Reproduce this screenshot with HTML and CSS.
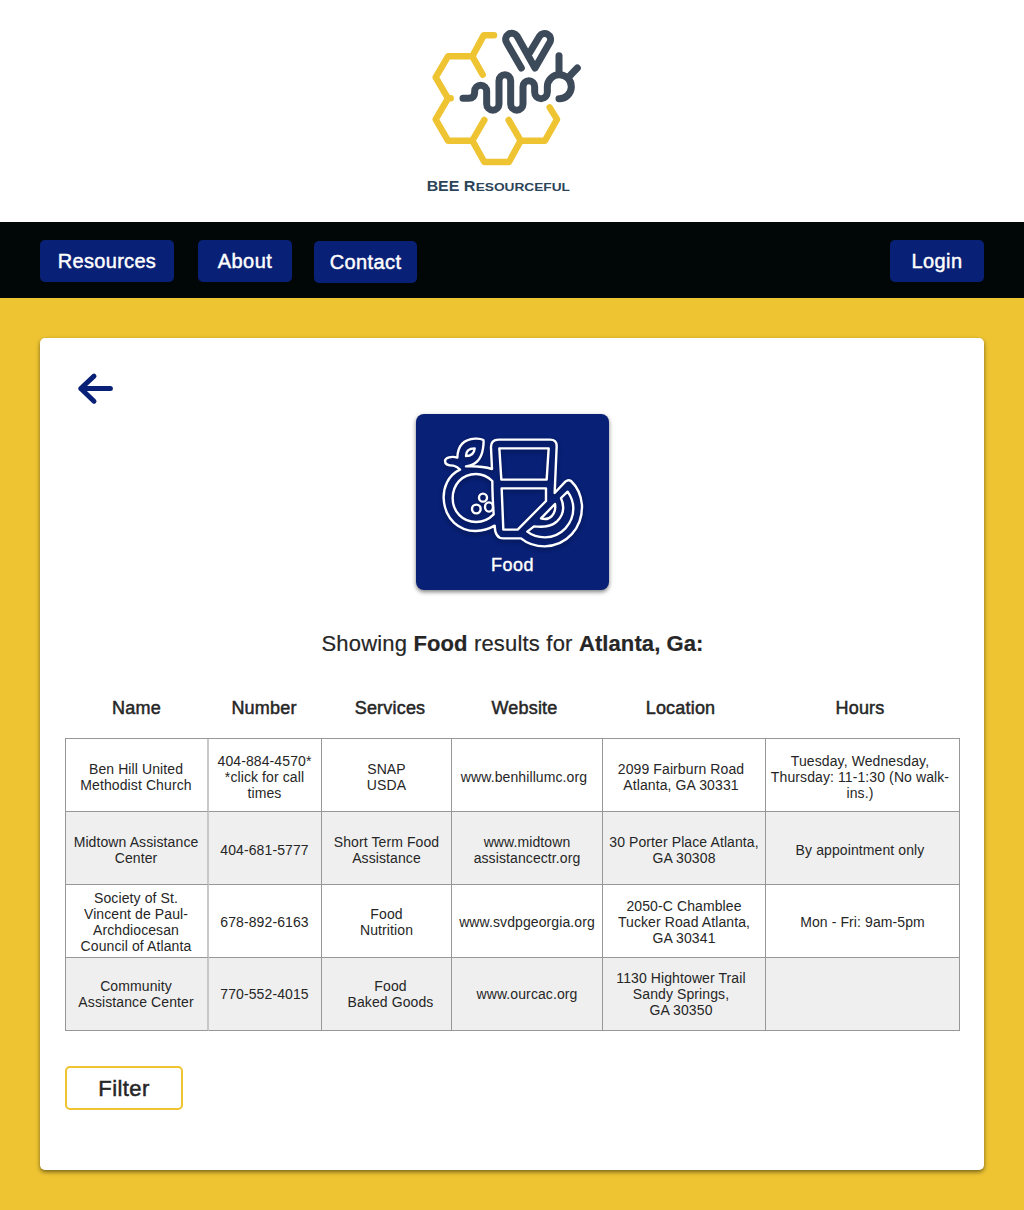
FILE: index.html
```html
<!DOCTYPE html>
<html lang="en">
<head>
<meta charset="utf-8">
<title>BEE Resourceful</title>
<link rel="stylesheet" href="styles.css">
</head>
<body>
<header class="brand">
  <svg class="brand-logo" viewBox="0 0 570 540" role="img" aria-label="BEE Resourceful">
    <g class="comb">
      <path d="M246 46H215L181 109L212 164M181 109H108L71 172L108 235H116M108 235L71 298L108 362H181L217 300M181 362L217 426H291L326 362L290 300M326 362H399L435 298L413 262"/>
    </g>
    <g class="bee">
      <path d="M153 235H170Q188 235 188 217V214A18 18 0 0 1 224 214V252A18.5 18.5 0 0 0 261 252V182A17.5 17.5 0 0 1 296 182V252A18.5 18.5 0 0 0 333 252V200A17.5 17.5 0 0 1 368 200V217A19 19 0 0 0 406 217V200A36 36 0 1 1 441 236"/>
      <path d="M441 162V107M470 171L496 144"/>
      <path d="M328 144L284 68A18 18 0 0 1 315 48L369 144L414 66A18 18 0 0 0 383 48L353 98"/>
    </g>
    <g class="brand-name">
      <text class="brand-cap" x="44" y="512" textLength="98" lengthAdjust="spacingAndGlyphs">BEE</text>
      <text class="brand-cap" x="155" y="512" textLength="35" lengthAdjust="spacingAndGlyphs">R</text>
      <text class="brand-small" x="191" y="512" textLength="283" lengthAdjust="spacingAndGlyphs">ESOURCEFUL</text>
    </g>
  </svg>
</header>

<nav class="nav">
  <a class="nav-button nav-resources">Resources</a>
  <a class="nav-button nav-about">About</a>
  <a class="nav-button nav-contact">Contact</a>
  <a class="nav-button nav-login">Login</a>
</nav>

<main class="page">
  <section class="card">
    <a class="back" aria-label="Back">
      <svg viewBox="0 0 37 33" width="37" height="33"><path d="M18 4.2L4.8 16.5L18 29.2M4.8 16.5H34.4"/></svg>
    </a>

    <div class="tile">
      <svg class="tile-icon" viewBox="90 90 440 345">
        <path d="M434 264L440 125Q441 104 420 104H266Q242 104 243 128L246 192Q215 182 168 184Q212 179 219 130Q222 110 220 105Q212 100 195 101C160 103 143 125 142 158C125 152 105 158 105 168C105 179 118 182 130 182Q141 184 150 194C112 212 100 250 101 280C104 345 150 378 197 378Q228 377 254 362Q255 400 280 400H333Q362 424 404 424C470 422 518 370 516 300Q512 255 483 228Q475 222 466 230Z"/>
        <path d="M168 153Q168 130 194 130Q192 153 168 153Z"/>
        <path d="M247 228Q225 207 198 207C155 207 128 240 128 280C128 320 158 351 198 351Q230 350 251 328Q247 270 247 228Z"/>
        <circle cx="219" cy="278" r="12"/>
        <circle cx="199" cy="312" r="13"/>
        <ellipse cx="237" cy="306" rx="12" ry="14"/>
        <path d="M268 130H416L410 224H274Z"/>
        <path d="M275 250H408V288L323 374H280Z"/>
        <path d="M473 260L453 279C464 305 461 330 441 349C422 366 400 367 372 364L352 380C368 393 385 397 405 397C455 396 490 355 490 310Q490 284 473 260Z"/>
        <path d="M435 297L393 340C418 349 440 327 435 297Z"/>
      </svg>
      <span class="tile-label">Food</span>
    </div>

    <h1 class="results-title">Showing <b>Food</b> results for <b>Atlanta, Ga:</b></h1>

    <div class="results-head">
      <span>Name</span><span>Number</span><span>Services</span><span>Website</span><span>Location</span><span>Hours</span>
    </div>
    <div class="results">
      <div class="row row-first">
        <div class="cell name">Ben Hill United<br>Methodist Church</div>
        <div class="cell number">404-884-4570*<br>*click for call<br>times</div>
        <div class="cell">SNAP<br>USDA</div>
        <div class="cell site-left">www.benhillumc.org</div>
        <div class="cell place">2099 Fairburn Road<br>Atlanta, GA 30331</div>
        <div class="cell hours">Tuesday, Wednesday,<br>Thursday: 11-1:30 (No walk-<br>ins.)</div>
      </div>
      <div class="row row-second">
        <div class="cell name">Midtown Assistance<br>Center</div>
        <div class="cell number">404-681-5777</div>
        <div class="cell">Short Term Food<br>Assistance</div>
        <div class="cell">www.midtown<br>assistancectr.org</div>
        <div class="cell">30 Porter Place Atlanta,<br>GA 30308</div>
        <div class="cell hours">By appointment only</div>
      </div>
      <div class="row row-third">
        <div class="cell name">Society of St.<br>Vincent de Paul-<br>Archdiocesan<br>Council of Atlanta</div>
        <div class="cell number">678-892-6163</div>
        <div class="cell">Food<br>Nutrition</div>
        <div class="cell">www.svdpgeorgia.org</div>
        <div class="cell">2050-C Chamblee<br>Tucker Road Atlanta,<br>GA 30341</div>
        <div class="cell hours-late">Mon - Fri: 9am-5pm</div>
      </div>
      <div class="row row-fourth">
        <div class="cell name">Community<br>Assistance Center</div>
        <div class="cell number">770-552-4015</div>
        <div class="cell goods">Food<br>Baked Goods</div>
        <div class="cell">www.ourcac.org</div>
        <div class="cell place">1130 Hightower Trail<br>Sandy Springs,<br>GA 30350</div>
        <div class="cell hours"></div>
      </div>
    </div>

    <button class="filter">Filter</button>
  </section>
</main>
</body>
</html>
```
FILE: styles.css
```css
* { box-sizing: border-box; }

body {
  margin: 0;
  background: #eec432;
  color: #262626;
  font-family: "Liberation Sans", Arial, Helvetica, sans-serif;
}

.brand {
  height: 222px;
  padding-top: 20px;
  padding-left: 412px;
  background: #fff;
}
.brand-logo { display: block; width: 190px; height: 180px; }
.comb, .bee {
  fill: none;
  stroke-linecap: round;
  stroke-linejoin: round;
}
.comb { stroke: #eec432; stroke-width: 19.5; }
.bee { stroke: #3d4a5a; stroke-width: 21; }
.brand-name {
  fill: #2c4459;
  font-family: "Liberation Sans", Arial, sans-serif;
  font-weight: 700;
}
.brand-cap { font-size: 42px; }
.brand-small { font-size: 35px; }

.nav {
  display: flex;
  align-items: flex-start;
  height: 76px;
  padding: 18px 40px 0;
  background: #000706;
}
.nav-button {
  height: 42px;
  border-radius: 5px;
  background: #082075;
  color: #fff;
  font-size: 20px;
  line-height: 43px;
  letter-spacing: 0.4px;
  text-align: center;
  -webkit-text-stroke: 0.45px #fff;
}
.nav-resources { width: 134px; letter-spacing: 0.3px; }
.nav-about { width: 94px; margin-left: 24px; }
.nav-contact { width: 103px; margin-left: 22px; margin-top: 1px; }
.nav-login { width: 94px; margin-left: auto; }

.page { padding: 40px; }
.card {
  display: flex;
  flex-direction: column;
  align-items: flex-start;
  height: 832px;
  padding: 34px 24px 0 25px;
  border-radius: 5px;
  background: #fff;
  box-shadow: 0 2px 4px rgba(0, 0, 0, 0.5);
}

.back { display: block; height: 33px; margin-left: 11px; }
.back svg {
  display: block;
  fill: none;
  stroke: #082075;
  stroke-width: 5;
  stroke-linecap: round;
  stroke-linejoin: round;
}

.tile {
  display: flex;
  flex-direction: column;
  align-items: flex-start;
  width: 193px;
  height: 176px;
  margin-top: 9px;
  margin-left: 351px;
  padding-top: 21px;
  border-radius: 8px;
  background: #082075;
  box-shadow: 0 2px 4px rgba(0, 0, 0, 0.5);
}
.tile-icon {
  display: block;
  width: 146.67px;
  height: 115px;
  margin-left: 24px;
  fill: none;
  stroke: #fff;
  stroke-width: 7.2;
  stroke-linejoin: round;
  filter: drop-shadow(0 2px 2px rgba(0, 0, 0, 0.35));
}
.tile-label {
  align-self: center;
  margin-top: 4px;
  color: #fff;
  font-size: 18px;
  line-height: 22px;
  letter-spacing: 0.5px;
  -webkit-text-stroke: 0.4px #fff;
}

.results-title {
  align-self: stretch;
  margin: 39px 0 0;
  font-size: 22px;
  font-weight: 400;
  line-height: 30px;
  letter-spacing: 0.19px;
  text-align: center;
  -webkit-text-stroke: 0.2px #262626;
}
.results-title b { letter-spacing: 0.1px; }

.results-head, .row {
  display: grid;
  grid-template-columns: 143px 113px 130px 151px 163px 194px;
}
.results-head {
  height: 79px;
  padding-top: 37px;
  font-size: 18px;
  line-height: 24px;
  letter-spacing: 0.2px;
  text-align: center;
  -webkit-text-stroke: 0.5px #262626;
}
.results-head span:nth-child(2) { padding-right: 1px; }
.results-head span:nth-child(3) { padding-left: 8px; }
.results-head span:nth-child(4) { padding-right: 4px; }
.results-head span:nth-child(5) { padding-right: 6px; }
.results-head span:nth-child(6) { padding-right: 4px; }

.results {
  border-top: 1px solid #979797;
  border-left: 1px solid #979797;
  font-size: 14px;
  line-height: 16px;
  letter-spacing: 0.1px;
  text-align: center;
  white-space: nowrap;
}
.row { height: 73px; }
.row:nth-child(even) { background: #efefef; }
.cell {
  display: flex;
  justify-content: center;
  align-items: center;
  border-right: 1px solid #979797;
  border-bottom: 1px solid #979797;
}
.name { padding-right: 1px; border-right: 2px solid #c8c8c8; }
.number { padding-right: 1px; }
.row-first .cell { padding-top: 3px; }
.row-second .cell { padding-top: 3px; }
.row-third .cell { padding-top: 1px; }
.row-fourth .cell { padding-bottom: 1px; }
.site-left { padding-right: 6px; }
.place { padding-right: 6px; }
.hours { padding-right: 5px; }
.goods { padding-left: 8px; }

.filter {
  width: 118px;
  height: 44px;
  margin-top: 35px;
  padding: 1px 0 0;
  border: 2px solid #eec432;
  border-radius: 5px;
  background: #fff;
  color: #262626;
  font-family: inherit;
  font-size: 22px;
  letter-spacing: 0.4px;
  -webkit-text-stroke: 0.5px #262626;
}
```
